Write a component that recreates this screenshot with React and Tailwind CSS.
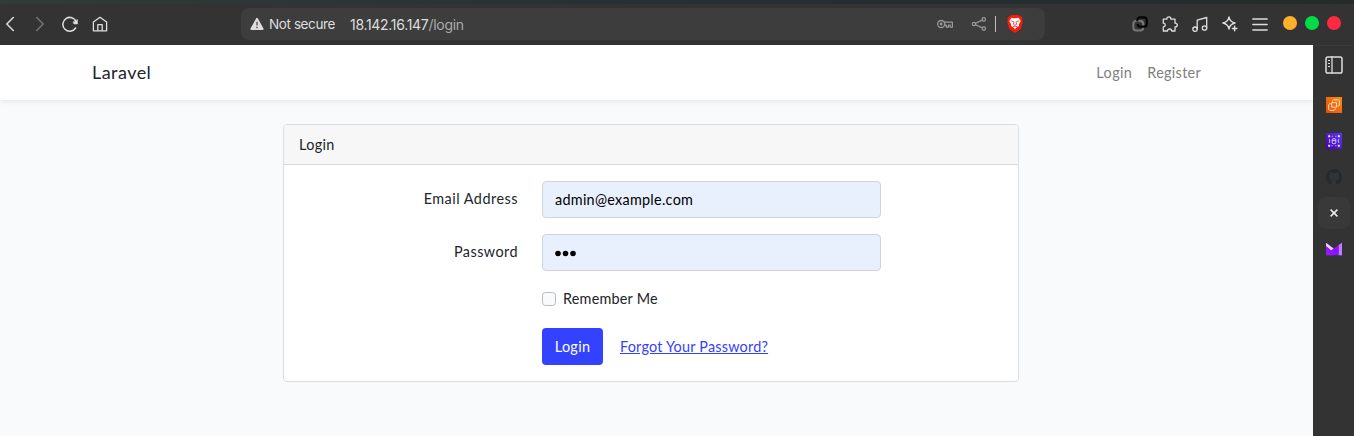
import React from "react";

function Icon({ children, className = "", size = 16 }) {
  return (
    <svg
      width={size}
      height={size}
      viewBox={`0 0 ${size} ${size}`}
      fill="none"
      stroke="currentColor"
      strokeWidth="1.3"
      strokeLinecap="round"
      strokeLinejoin="round"
      className={`shrink-0 ${className}`}
    >
      {children}
    </svg>
  );
}

function Toolbar() {
  return (
    <header className="flex h-[45px] shrink-0 flex-col bg-[#333333]">
      <div className="h-1 shrink-0 bg-linear-to-r from-[#303c39] via-[#253032] to-[#242b2b]" />
      <div className="flex h-10 items-center pl-0.5 text-[#dedede]">
        <div className="flex gap-3.5">
          <Icon><path d="M11.3 1.5 4.8 8l6.500 6.500" strokeWidth="1.500" /></Icon>
          <Icon className="text-[#777777]"><path d="M4.700 1.500 11.200 8l-6.500 6.500" strokeWidth="1.500" /></Icon>
          <Icon>
            <path d="M14.200 5.800A6.900 6.900 0 1 0 13.600 12" strokeWidth="1.500" />
            <path d="M15.500 3.800v4.200h-3.500l-.9-1.800z" fill="currentColor" strokeWidth=".5" />
          </Icon>
          <Icon>
            <path d="M1.400 14.800V6L8 1.200 14.600 6v8.800z" />
            <path d="M5.800 14.500V8.600h4.400v5.900" />
          </Icon>
        </div>
        <div className="ml-[133px] flex h-8 w-[804px] items-center rounded-lg bg-[#3d3d3d] pl-[9px]">
          <svg width="14" height="14" viewBox="0 0 14 14" className="shrink-0">
            <path d="M7 1.700 12.700 12H1.300z" fill="#dedede" stroke="#dedede" strokeWidth="1.800" strokeLinejoin="round" />
            <path d="M7 4.800v3.600M7 9.700v1.500" stroke="#555" strokeWidth="1.400" />
          </svg>
          <span className="ml-[5px] mt-px w-[81px] whitespace-nowrap font-['Inter',sans-serif] text-[13.500px] tracking-[-0.760px]"><span className="tracking-[-0.4px]">Not secure</span></span>
          <span className="mt-px whitespace-nowrap font-['Inter',sans-serif] text-[14px] tracking-[-0.3px]">
            18.142.16.147<span className="text-[#aaaaaa]">/login</span>
          </span>
          <div className="ml-auto flex items-center pr-[22px] text-[#9a9a9a]">
            <Icon>
              <circle cx="4.200" cy="8" r="3.500" />
              <circle cx="4.200" cy="8" r=".8" fill="currentColor" />
              <path d="M7.500 6.200h7.900v5h-2.300V9.200h-1.700v2H9.300V9.200H7.500" strokeWidth="1.200" />
            </Icon>
            <Icon className="ml-[18px]">
              <circle cx="3" cy="8" r="1.700" strokeWidth="1.200" />
              <circle cx="12.800" cy="3.400" r="1.700" strokeWidth="1.200" />
              <circle cx="12.800" cy="12.600" r="1.700" strokeWidth="1.200" />
              <path d="m4.600 7.200 6.600-3.100M4.600 8.800l6.600 3.100" strokeWidth="1.200" />
            </Icon>
            <span className="ml-2 h-4 w-px bg-[#bebebe]" />
            <svg width="16" height="18" viewBox="0 0 16 18" className="ml-[11px]">
              <path d="M4.400 0h7.200l1.300 1.500 1.600-.1 1.200 2.300-.6 1.600.6 1.800-2 7L8 18l-5.700-3.900-2-7 .6-1.800-.6-1.600 1.200-2.300 1.600.1z" fill="#fb1b0a" />
              <path d="m4.500 2.800 2 .5h3l2-.5L13.700 6l-1.900 3.500.3 1.500-2.400 1.300L8 14.200l-1.700-1.900L3.900 11l.3-1.500L2.300 6z" fill="#fff" />
              <path d="m4.200 5.900 2.500.8M11.800 5.900l-2.500.8M7 6.800l-.6 2.500L8 10.300l1.600-1L9 6.800M6 11.800l2-.8 2 .8" fill="none" stroke="#fb3325" strokeWidth=".9" />
            </svg>
          </div>
        </div>
        <div className="ml-[87px] flex items-center gap-3.5">
          <Icon>
            <rect x="1.400" y="5" width="9.800" height="9.600" rx="2.800" stroke="#77777a" strokeWidth="2" />
            <path d="M5.500 5.500V4a2.700 2.700 0 0 1 2.700-2.700h3.900A2.700 2.700 0 0 1 14.800 4v4a2.700 2.700 0 0 1-2.700 2.700H8.300a2.700 2.700 0 0 1-2.700-2.700" stroke="#050505" strokeWidth="2.200" strokeLinecap="butt" />
            <path d="M6.500 5h2a2.700 2.700 0 0 1 2.700 2.700v1" stroke="#77777a" strokeWidth="2" strokeLinecap="butt" />
          </Icon>
          <Icon>
            <path d="M1.300 3.200h3.500C4.800 1.700 5.600.9 6.900.9S9 1.700 9 3.200h4v4c1.500-.1 2.300.7 2.300 1.900S14.500 11 13 11v4H9.700c-.1-1.300-.9-2-2.100-2s-2 .7-2.100 2H1.300v-4.200c1.400-.1 2-.8 2-1.800S2.700 7.300 1.300 7.200z" />
          </Icon>
          <Icon>
            <circle cx="3" cy="13.200" r="2.200" />
            <circle cx="12.500" cy="12" r="2.200" />
            <path d="M5.200 13.200V4.200l9.500-2.700V12" />
          </Icon>
          <Icon>
            <path d="M7 .9c.7 3.900 2.200 5.400 6.100 6.100-3.900.7-5.400 2.200-6.100 6.100C6.300 9.200 4.800 7.700.9 7 4.800 6.300 6.300 4.800 7 .9z" />
            <path d="M12.600 10.300v4.400M10.400 12.500h4.400" strokeWidth="1.500" />
          </Icon>
          <Icon><path d="M.8 3h14.400M.8 8.500h14.400M.8 14h14.400" strokeWidth="1.300" /></Icon>
        </div>
        <div className="mb-0.5 ml-[15px] flex gap-2">
          <span className="size-3.5 rounded-full bg-[#ffb02a]" />
          <span className="size-3.5 rounded-full bg-[#00dc48]" />
          <span className="size-3.5 rounded-full bg-[#ff2944]" />
        </div>
      </div>
    </header>
  );
}

function Sidebar() {
  return (
    <aside className="flex w-[41px] shrink-0 flex-col items-center border-t border-[#3a3a3a] bg-[#333333] pt-[10px] text-[#dedede]">
      <Icon size={18}>
        <rect x="1" y="1" width="16" height="16" rx="1.800" strokeWidth="1.500" />
        <path d="M7 1v16" strokeWidth="1.300" />
        <path d="M3 4.500h2M3 7.500h2M3 10.500h2" strokeWidth="1.200" strokeLinecap="butt" />
      </Icon>
      <svg width="16" height="16" viewBox="0 0 16 16" className="mt-[23px] shrink-0">
        <defs>
          <linearGradient id="orange" x1="0" y1="1" x2="1" y2="0"><stop stopColor="#e84b06" /><stop offset="1" stopColor="#ff8a0c" /></linearGradient>
        </defs>
        <path d="M0 0h16v16H0z" fill="url(#orange)" />
        <path d="M6.500 4.500V3.700L7.500 2.800h5.100l.8.800v4.700l-.8.800h-1.200M4.700 6.800H3.500l-.8.800v4.800l.9.900h4.700l.9-.9V11.300M5.700 5.600h4.800v4.600H5.700z" fill="none" stroke="#ffe2ca" strokeWidth="1" />
      </svg>
      <svg width="16" height="16" viewBox="0 0 16 16" className="mt-5 shrink-0">
        <defs>
          <linearGradient id="violet" x1="0" y1="1" x2="1" y2="0"><stop stopColor="#4600b4" /><stop offset="1" stopColor="#5b37f2" /></linearGradient>
        </defs>
        <path d="M0 0h16v16H0z" fill="url(#violet)" />
        <path d="M2.200 2.200h2v2h-2zM11.800 2.200h2v2h-2zM2.200 11.800h2v2h-2zM11.800 11.800h2v2h-2z" fill="#eee7ff" />
        <path d="M6.200 6.300v3.900l.8.500h2l.8-.5V6.300L9 5.700H7zM6.200 7.500h3.600M5.700 3.300h1M9.300 3.300h1M5.700 12.700h1M9.300 12.700h1M2.800 6c1.300.7 1.300 3.300 0 4M13.200 6c-1.300.7-1.300 3.300 0 4" fill="none" stroke="#ddd2ff" strokeWidth=".9" />
      </svg>
      <svg width="16" height="16" viewBox="0 0 16 16" fill="#24292e" className="mt-5 shrink-0">
        <path d="M8 0C3.580 0 0 3.580 0 8c0 3.540 2.290 6.530 5.470 7.590.4.070.55-.17.55-.38 0-.19-.01-.82-.01-1.490-2.010.37-2.530-.49-2.690-.94-.09-.23-.48-.94-.82-1.130-.28-.15-.68-.52-.01-.53.63-.01 1.080.58 1.230.82.72 1.210 1.870.87 2.330.66.07-.52.28-.87.51-1.070-1.780-.2-3.640-.89-3.640-3.950 0-.87.31-1.590.82-2.150-.08-.2-.36-1.020.08-2.120 0 0 .67-.21 2.200.82a7.600 7.600 0 0 1 4 0c1.530-1.040 2.200-.82 2.200-.82.44 1.100.16 1.920.08 2.120.51.560.82 1.270.82 2.150 0 3.070-1.870 3.750-3.650 3.950.29.25.54.73.54 1.480 0 1.070-.01 1.930-.01 2.200 0 .21.15.46.55.38A8 8 0 0 0 16 8c0-4.420-3.580-8-8-8Z" />
      </svg>
      <div className="mt-3 flex h-8 w-8 shrink-0 items-center justify-center rounded-lg bg-[#393939]">
        <svg width="8" height="8" viewBox="0 0 8 8"><path d="m.6.6 6.800 6.800M7.400.6.600 7.400" stroke="#efefef" strokeWidth="1.500" /></svg>
      </div>
      <svg width="16" height="14" viewBox="0 0 16 14" className="mt-[13px] shrink-0">
        <path d="M0 .7 7.600 6.500 16 .7V13.300H0z" fill="#8a12fb" />
        <path d="m0 .7 7.600 5.800-2.400 2L0 4.200z" fill="#ead0ff" />
        <path d="m0 4.200 5.200 4.300L8 6.500 6.500 13.300H0z" fill="#9216ff" />
        <path d="M12.800 3 16 .7v12.600h-3.200z" fill="#c27dff" />
      </svg>
    </aside>
  );
}

function Field({ label, className = "", children }) {
  return (
    <div className={`flex h-[37px] ${className}`}>
      <label className="w-[234px] pt-1.5 text-right text-[#212529]">{label}</label>
      <div className="ml-6 flex w-[339px] items-center rounded-[4px] border border-[#ced4da] bg-[#e8f0fe] px-3 text-black">{children}</div>
    </div>
  );
}

export default function App() {
  return (
    <div className="flex h-[436px] w-[1354px] flex-col overflow-hidden bg-[#333333]">
      <Toolbar />
      <div className="flex min-h-0 flex-1">
        <div className="flex w-[1313px] flex-col bg-[#f8fafc] font-['Lato','Noto_Sans',sans-serif] text-[14.400px] leading-[23px] text-[#212529]">
          <nav className="flex h-[55px] shrink-0 items-center bg-white pb-px pr-[112px] pl-[92px] shadow-[0_2px_4px_rgba(0,0,0,0.075)]">
            <a className="text-[18px] tracking-[0.45px]">Laravel</a>
            <a className="ml-auto tracking-[0.4px] text-[#808080]">Login</a>
            <a className="ml-[15px] tracking-[0.3px] text-[#808080]">Register</a>
          </nav>
          <main className="mt-6 ml-[283px] h-[258px] w-[736px] rounded-[4px] border border-[#dcdddf] bg-white">
            <div className="flex h-10 items-center rounded-t-[3px] border-b border-[#d9d9da] bg-[#f7f7f7] pb-px pl-[15px] tracking-[0.35px]">Login</div>
            <form className="pt-4">
              <Field label={<span className="tracking-[0.5px]">Email Address</span>}>
                <span className="pb-px tracking-[0.28px]">admin@example.com</span>
              </Field>
              <Field label={<span className="tracking-[0.45px]">Password</span>} className="mt-4">
                <svg width="23" height="7" viewBox="0 0 23 7" className="mt-px">
                  <circle cx="3" cy="3.500" r="2.800" /><circle cx="10.500" cy="3.500" r="2.800" /><circle cx="18" cy="3.500" r="2.800" />
                </svg>
              </Field>
              <label className="mt-4 ml-[258px] flex h-[23px] items-center">
                <span className="size-3.5 rounded-[3.500px] border border-[#b8babd] bg-[#f8fafc]" />
                <span className="ml-[7px] pb-px tracking-[0.22px]">Remember Me</span>
              </label>
              <div className="mt-[18px] ml-[258px] flex items-center">
                <button type="button" className="h-[37px] w-[61px] rounded-[4px] bg-[#3342ff] pb-px tracking-[0.3px] text-white">Login</button>
                <a className="ml-[17px] pb-px tracking-[0.22px] text-[#3342ff] underline">Forgot Your Password?</a>
              </div>
            </form>
          </main>
        </div>
        <Sidebar />
      </div>
    </div>
  );
}
